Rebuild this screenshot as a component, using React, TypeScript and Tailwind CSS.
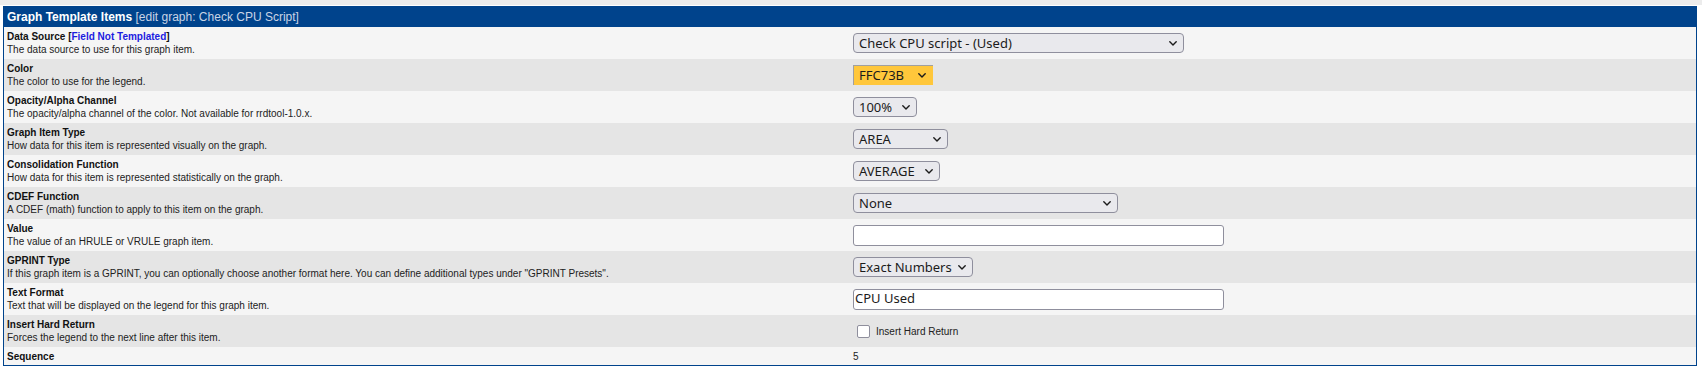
import React from "react";

const Chevron = () => (
  <svg width="8" height="5" viewBox="0 0 8 5" className="shrink-0">
    <path
      d="M0.8 0.8 L4 4 L7.2 0.8"
      fill="none"
      stroke="#1b1b1b"
      strokeWidth="1.4"
      strokeLinecap="round"
      strokeLinejoin="round"
    />
  </svg>
);

function Select({ text, className }: { text: string; className: string }) {
  return (
    <div
      className={
        "flex h-[20px] items-center justify-between rounded-[4px] border border-[#8f8f9d] bg-[#e9e9ed] pl-[5px] pr-[6px] text-[13px] leading-[18px] text-[#1b1b1b] " +
        className
      }
      style={{ fontFamily: '"Noto Sans", "Open Sans", sans-serif' }}
    >
      <span className="whitespace-nowrap">{text}</span>
      <Chevron />
    </div>
  );
}

function TextInput({ value }: { value: string }) {
  return (
    <div
      className="flex h-[21px] w-[371px] items-center rounded-[3px] border border-[#8f8f9d] bg-white pl-[1px] text-[13px] text-[#1b1b1b]"
      style={{ fontFamily: '"Noto Sans", "Open Sans", sans-serif' }}
    >
      {value}
    </div>
  );
}

type Row = {
  label: React.ReactNode;
  desc: string;
  control: React.ReactNode;
};

const rows: Row[] = [
  {
    label: (
      <>
        Data Source [<span className="text-[#1c1ce0]">Field Not Templated</span>]
      </>
    ),
    desc: "The data source to use for this graph item.",
    control: <Select text="Check CPU script - (Used)" className="w-[331px]" />,
  },
  {
    label: "Color",
    desc: "The color to use for the legend.",
    control: (
      <div
        className="flex h-[20px] w-[80px] items-center justify-between border-l border-t border-[#a0a0a0] bg-[#FFC73B] pl-[5px] pr-[7px] text-[13px] text-[#1b1b1b]"
        style={{ fontFamily: '"Noto Sans", "Open Sans", sans-serif' }}
      >
        <span>FFC73B</span>
        <Chevron />
      </div>
    ),
  },
  {
    label: "Opacity/Alpha Channel",
    desc: "The opacity/alpha channel of the color. Not available for rrdtool-1.0.x.",
    control: <Select text="100%" className="w-[64px]" />,
  },
  {
    label: "Graph Item Type",
    desc: "How data for this item is represented visually on the graph.",
    control: <Select text="AREA" className="w-[95px]" />,
  },
  {
    label: "Consolidation Function",
    desc: "How data for this item is represented statistically on the graph.",
    control: <Select text="AVERAGE" className="w-[87px]" />,
  },
  {
    label: "CDEF Function",
    desc: "A CDEF (math) function to apply to this item on the graph.",
    control: <Select text="None" className="w-[265px]" />,
  },
  {
    label: "Value",
    desc: "The value of an HRULE or VRULE graph item.",
    control: <TextInput value="" />,
  },
  {
    label: "GPRINT Type",
    desc: 'If this graph item is a GPRINT, you can optionally choose another format here. You can define additional types under "GPRINT Presets".',
    control: <Select text="Exact Numbers" className="w-[120px]" />,
  },
  {
    label: "Text Format",
    desc: "Text that will be displayed on the legend for this graph item.",
    control: <TextInput value="CPU Used" />,
  },
  {
    label: "Insert Hard Return",
    desc: "Forces the legend to the next line after this item.",
    control: (
      <div className="flex items-center pl-[4px]">
        <div className="h-[13px] w-[13px] rounded-[2px] border border-[#8f8f9d] bg-white" />
        <span className="ml-[6px] text-[10px] text-[#222]">Insert Hard Return</span>
      </div>
    ),
  },
];

export default function App() {
  return (
    <div
      className="min-h-[373px] w-[1702px] bg-white"
      style={{ fontFamily: '"Liberation Sans", Arial, sans-serif' }}
    >
      <div className="h-[5px] bg-[#ececec]" />
      <div className="ml-[3px] mt-px w-[1694px] border border-[#00438c]">
        <div className="h-[20px] bg-[#00438c] pl-[3px] text-[12px] leading-[20px]">
          <span className="font-bold text-white">Graph Template Items</span>
          <span className="text-[#c9d4e6]"> [edit graph: Check CPU Script]</span>
        </div>
        {rows.map((r, i) => (
          <div
            key={i}
            className={
              "grid h-[32px] grid-cols-2 " +
              (i % 2 === 0 ? "bg-[#f5f5f5]" : "bg-[#e5e5e5]")
            }
          >
            <div className="py-[3px] pl-[3px] text-[10px] leading-[13px]">
              <div className="font-bold text-[#111]">{r.label}</div>
              <div className="whitespace-nowrap text-[#222]">{r.desc}</div>
            </div>
            <div className="flex items-center pl-[3px]">{r.control}</div>
          </div>
        ))}
        <div className="grid h-[18px] grid-cols-2 bg-[#f5f5f5] text-[10px] leading-[13px]">
          <div className="flex items-center pl-[3px] font-bold text-[#111]">Sequence</div>
          <div className="flex items-center pl-[3px] text-[#222]">5</div>
        </div>
      </div>
    </div>
  );
}
